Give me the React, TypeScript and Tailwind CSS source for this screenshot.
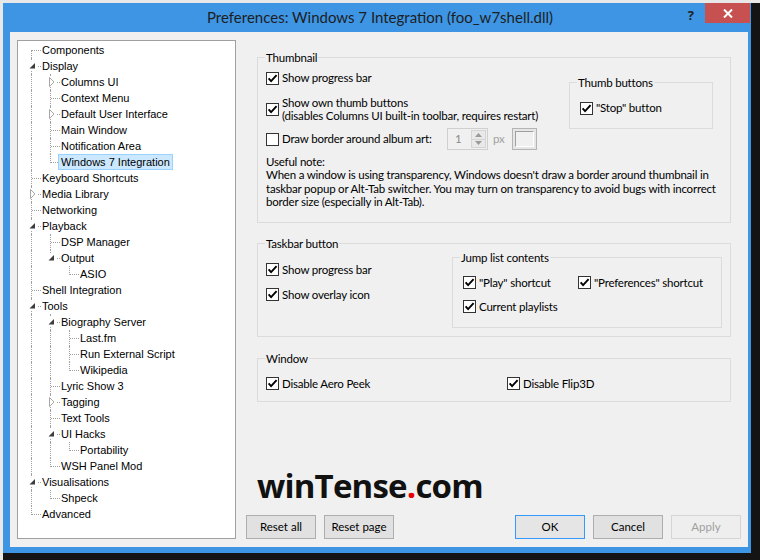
import React from "react";

type Node = { label: string; level: number; exp?: "open" | "closed"; selected?: boolean };

const TREE: Node[] = [
  { label: "Components", level: 0 },
  { label: "Display", level: 0, exp: "open" },
  { label: "Columns UI", level: 1, exp: "closed" },
  { label: "Context Menu", level: 1 },
  { label: "Default User Interface", level: 1, exp: "closed" },
  { label: "Main Window", level: 1 },
  { label: "Notification Area", level: 1 },
  { label: "Windows 7 Integration", level: 1, selected: true },
  { label: "Keyboard Shortcuts", level: 0 },
  { label: "Media Library", level: 0, exp: "closed" },
  { label: "Networking", level: 0 },
  { label: "Playback", level: 0, exp: "open" },
  { label: "DSP Manager", level: 1 },
  { label: "Output", level: 1, exp: "open" },
  { label: "ASIO", level: 2 },
  { label: "Shell Integration", level: 0 },
  { label: "Tools", level: 0, exp: "open" },
  { label: "Biography Server", level: 1, exp: "open" },
  { label: "Last.fm", level: 2 },
  { label: "Run External Script", level: 2 },
  { label: "Wikipedia", level: 2 },
  { label: "Lyric Show 3", level: 1 },
  { label: "Tagging", level: 1, exp: "closed" },
  { label: "Text Tools", level: 1 },
  { label: "UI Hacks", level: 1, exp: "open" },
  { label: "Portability", level: 2 },
  { label: "WSH Panel Mod", level: 1 },
  { label: "Visualisations", level: 0, exp: "open" },
  { label: "Shpeck", level: 1 },
  { label: "Advanced", level: 0 },
];

function hasNext(i: number) {
  const lv = TREE[i].level;
  for (let j = i + 1; j < TREE.length; j++) {
    if (TREE[j].level < lv) return false;
    if (TREE[j].level === lv) return true;
  }
  return false;
}

function ancestorContinues(i: number, k: number) {
  for (let j = i - 1; j >= 0; j--) {
    if (TREE[j].level === k) return hasNext(j);
  }
  return false;
}

function Expander({ kind }: { kind: "open" | "closed" }) {
  return (
    <svg width="11" height="10" viewBox="0 0 11 10" className="absolute left-[4px] top-[3px]">
      <rect width="11" height="10" fill="#fff" />
      {kind === "closed" ? (
        <polygon points="4.5,0.5 9,5 4.5,9.5" fill="#fff" stroke="#a6a6a6" strokeWidth="1" />
      ) : (
        <polygon points="9,2 9,7.5 3.5,7.5" fill="#3c3c3c" />
      )}
    </svg>
  );
}

function TreeRow({ node, i }: { node: Node; i: number }) {
  const cells = [];
  for (let k = 0; k < node.level; k++) {
    cells.push(
      <span key={k} className="relative w-[19px] h-[16px] shrink-0">
        {ancestorContinues(i, k) && (
          <span className="absolute left-[9px] top-0 h-[16px] border-l border-dotted border-[#a0a0a0]" />
        )}
      </span>
    );
  }
  const next = hasNext(i);
  const first = i === 0;
  return (
    <div className="flex h-[16px] items-center">
      {cells}
      <span className="relative w-[19px] h-[16px] shrink-0">
        {first ? (
          <span className="absolute left-[9px] top-[8px] h-[8px] border-l border-dotted border-[#a0a0a0]" />
        ) : next ? (
          <span className="absolute left-[9px] top-0 h-[16px] border-l border-dotted border-[#a0a0a0]" />
        ) : (
          <span className="absolute left-[9px] top-0 h-[9px] border-l border-dotted border-[#a0a0a0]" />
        )}
        <span className="absolute left-[10px] top-[8px] w-[9px] border-t border-dotted border-[#a0a0a0]" />
        {node.exp && <Expander kind={node.exp} />}
      </span>
      <span
        className={`relative -ml-[2px] h-[16px] border px-[2px] leading-[14px] whitespace-nowrap ${
          node.selected ? "bg-[#cce8ff] border-[#99d1ff]" : "border-transparent"
        }`}
      >
        {node.label}
      </span>
    </div>
  );
}

function Check({ on }: { on: boolean }) {
  return (
    <span className="flex h-[13px] w-[13px] shrink-0 items-center justify-center border border-[#333333] bg-white">
      {on && (
        <svg width="11" height="11" viewBox="0 0 11 11">
          <path d="M1.6 5.4 L4.1 8.2 L9.6 2.2" fill="none" stroke="#000" strokeWidth="1.9" />
        </svg>
      )}
    </span>
  );
}

function Row({ label, on = true, className = "" }: { label: string; on?: boolean; className?: string }) {
  return (
    <div className={`flex h-[16px] items-center gap-[3px] whitespace-nowrap ${className}`}>
      <Check on={on} />
      <span>{label}</span>
    </div>
  );
}

function Group({
  title,
  className = "",
  children,
}: {
  title: string;
  className?: string;
  children: React.ReactNode;
}) {
  return (
    <div className={`relative border border-[#dcdcdc] ${className}`}>
      <span className="absolute -top-[8px] left-[7px] bg-[#f0f0f0] px-[1px] leading-[15px] whitespace-nowrap">
        {title}
      </span>
      {children}
    </div>
  );
}

function Btn({ label, primary, disabled }: { label: string; primary?: boolean; disabled?: boolean }) {
  return (
    <button
      className={`h-[24px] w-[70px] border ${
        primary
          ? "border-[#3399ff] bg-[#e5e5e5] text-black"
          : disabled
          ? "border-[#d5d5d5] bg-[#eeeeee] text-[#a0a0a0]"
          : "border-[#adadad] bg-[#e1e1e1] text-black"
      }`}
    >
      {label}
    </button>
  );
}

function SpinBox() {
  return (
    <div className="flex h-[22px] w-[41px] border border-[#cfcfcf] bg-[#f0f0f0]">
      <span className="flex-1 pl-[7px] leading-[20px] text-[#8a8a8a]">1</span>
      <div className="flex w-[17px] flex-col p-[1px]">
        <span className="flex flex-1 items-center justify-center border border-[#d4d4d4] bg-[#e9e9e9]">
          <svg width="7" height="4" viewBox="0 0 7 4">
            <polygon points="3.5,0 7,4 0,4" fill="#9a9a9a" />
          </svg>
        </span>
        <span className="flex flex-1 items-center justify-center border border-t-0 border-[#d4d4d4] bg-[#e9e9e9]">
          <svg width="7" height="4" viewBox="0 0 7 4">
            <polygon points="0,0 7,0 3.5,4" fill="#9a9a9a" />
          </svg>
        </span>
      </div>
    </div>
  );
}

export default function App() {
  return (
    <div className="h-[560px] w-[760px] overflow-hidden border-l-[3px] border-t-[3px] border-[#e8e8e8] bg-[#141414]">
      <div className="flex h-[550px] w-[748px] flex-col bg-[#3d95e4]">
        {/* Title bar */}
        <div className="relative flex h-[29px] shrink-0 items-center justify-center pb-[1px] pl-[6px] font-['Lato',sans-serif] text-[15px] text-[#1e1e1e]">
          Preferences: Windows 7 Integration (foo_w7shell.dll)
          <span className="absolute right-[57px] top-[4px] font-['Open_Sans',sans-serif] text-[13px] font-bold leading-[16px] text-[#222]">
            ?
          </span>
          <span className="absolute right-[1px] top-0 flex h-[20px] w-[45px] items-center justify-center bg-[#c75050]">
            <svg width="10" height="9" viewBox="0 0 10 9">
              <path d="M1 0.5 L9 8.5 M9 0.5 L1 8.5" stroke="#fff" strokeWidth="2" />
            </svg>
          </span>
        </div>

        {/* Client */}
        <div className="mb-[6px] ml-[7px] mr-[3px] flex flex-1 gap-[10px] bg-[#f0f0f0] px-[7px] py-[8px]">
          {/* Tree */}
          <div className="h-[499px] w-[219px] shrink-0 border border-[#a0a0a0] bg-white pl-[4px] pt-[1px] font-['Liberation_Sans',sans-serif] text-[11px] text-black">
            {TREE.map((n, i) => (
              <TreeRow key={i} node={n} i={i} />
            ))}
          </div>

          {/* Page */}
          <div className="flex flex-1 flex-col font-['Lato',sans-serif] text-[11.5px] tracking-[-0.2px] text-black">
            <div className="ml-[11px] mr-[10px] mt-[17px]">
              <Group title="Thumbnail">
                <div className="grid grid-cols-[1fr_144px] pb-[14px] pl-[8px] pr-[17px] pt-[12px]">
                  <Row label="Show progress bar" className="col-start-1 row-start-1" />
                  <div className="col-start-1 row-start-2 mt-[10px] flex items-center gap-[3px] whitespace-nowrap">
                    <Check on />
                    <div className="leading-[13px]">
                      <div>Show own thumb buttons</div>
                      <div>(disables Columns UI built-in toolbar, requires restart)</div>
                    </div>
                  </div>
                  <div className="col-start-1 row-start-3 mt-[5px] flex h-[24px] items-center whitespace-nowrap">
                    <div className="flex w-[181px] items-center gap-[3px]">
                      <Check on={false} />
                      <span>Draw border around album art:</span>
                    </div>
                    <SpinBox />
                    <span className="ml-[5px] text-[#a0a0a0]">px</span>
                    <span className="ml-[7px] flex h-[22px] w-[25px] items-center justify-center border border-[#b4b4b4] bg-[#e6e6e6]">
                      <span className="h-[16px] w-[19px] border border-b-white border-l-[#a0a0a0] border-r-white border-t-[#a0a0a0] bg-[#f0f0f0]" />
                    </span>
                  </div>
                  <Group
                    title="Thumb buttons"
                    className="col-start-2 row-span-3 row-start-1 mt-[12px] self-start"
                  >
                    <div className="pb-[12px] pl-[10px] pt-[17px]">
                      <Row label={'"Stop" button'} />
                    </div>
                  </Group>
                  <div className="col-span-2 mt-[4px] whitespace-nowrap leading-[13.3px]">
                    <div>Useful note:</div>
                    <div>
                      When a window is using transparency, Windows doesn't draw a border around thumbnail in
                    </div>
                    <div>
                      taskbar popup or Alt-Tab switcher. You may turn on transparency to avoid bugs with incorrect
                    </div>
                    <div>border size (especially in Alt-Tab).</div>
                  </div>
                </div>
              </Group>

              <Group title="Taskbar button" className="mt-[20px]">
                <div className="flex pl-[8px] pr-[8px]">
                  <div className="flex flex-1 flex-col gap-[9px] pt-[17px]">
                    <Row label="Show progress bar" />
                    <Row label="Show overlay icon" />
                  </div>
                  <Group title="Jump list contents" className="mb-[8px] mt-[13px] w-[270px]">
                    <div className="flex flex-col gap-[8px] pb-[13px] pl-[10px] pt-[16px]">
                      <div className="flex">
                        <Row label={'"Play" shortcut'} className="w-[115px]" />
                        <Row label={'"Preferences" shortcut'} />
                      </div>
                      <Row label="Current playlists" />
                    </div>
                  </Group>
                </div>
              </Group>

              <Group title="Window" className="mt-[21px]">
                <div className="flex pb-[10px] pl-[8px] pt-[16px]">
                  <Row label="Disable Aero Peek" className="w-[241px]" />
                  <Row label="Disable Flip3D" />
                </div>
              </Group>
            </div>

            <div className="ml-[11px] mt-auto mb-[13px] h-[33px] whitespace-nowrap font-['Open_Sans',sans-serif] text-[33px] font-bold leading-[33px] tracking-[-0.8px] text-[#111]">
              winTense<span className="text-[#e60000]">.</span>com
            </div>

            <div className="flex justify-between tracking-normal">
              <div className="flex gap-[8px]">
                <Btn label="Reset all" />
                <Btn label="Reset page" />
              </div>
              <div className="flex gap-[8px]">
                <Btn label="OK" primary />
                <Btn label="Cancel" />
                <Btn label="Apply" disabled />
              </div>
            </div>
          </div>
        </div>
      </div>
    </div>
  );
}
